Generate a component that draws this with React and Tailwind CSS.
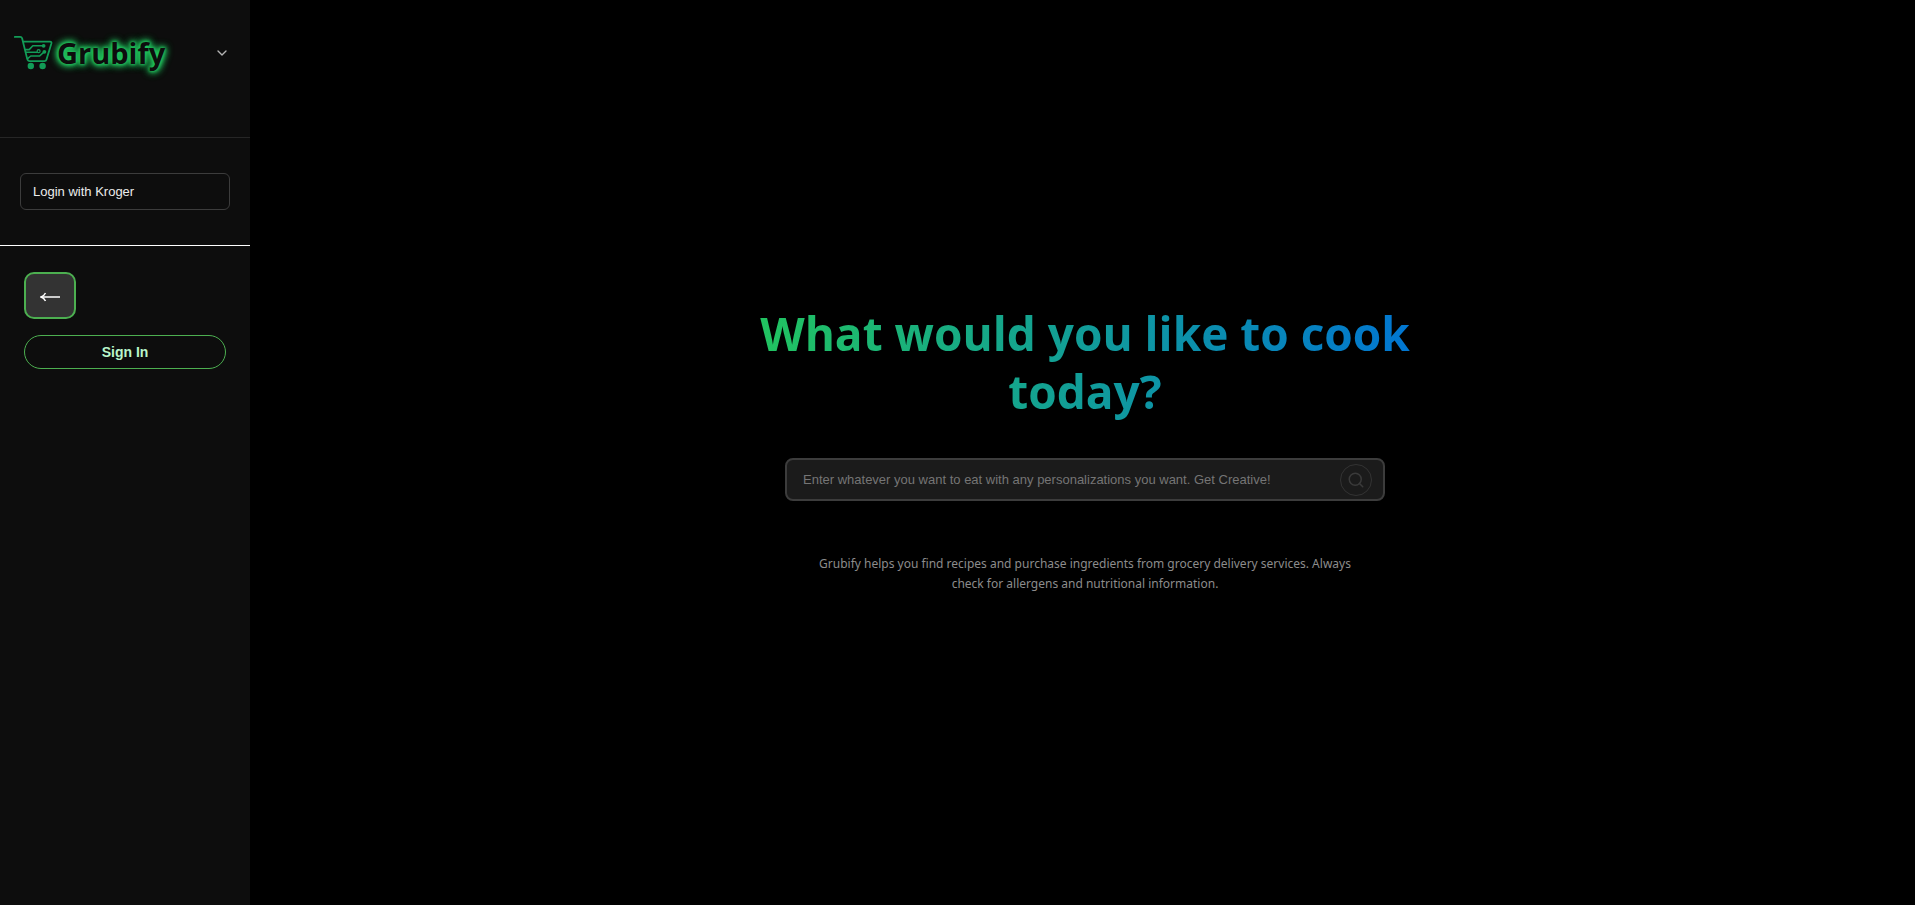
import React from "react";
import { ChevronDown, Search } from "lucide-react";

function CartLogo() {
  return (
    <svg viewBox="0 0 42 36" className="h-9 w-[42px] shrink-0" fill="none" stroke="#129c57" strokeLinecap="round" strokeLinejoin="round" aria-hidden="true">
      <path d="M1.8 2.9h5.4c1 0 1.6.5 1.9 1.4l5.1 20.6c.4 1.5 1.2 2.2 2.6 2.2h14.6c1 0 1.7-.4 2-1.4l5-16.2c.3-1.2-.2-1.8-1.4-1.8H10" strokeWidth="1.8" />
      <g strokeWidth="1.6">
        <path d="M12.6 15.6h3.6l3.6-3.8h10" />
        <path d="M13 18.2h11" />
        <path d="M14.6 24.6l3.2-2.6h8.8l4-3.6" />
      </g>
      <g fill="#129c57" stroke="none">
        <circle cx="30.6" cy="11.8" r="1.9" />
        <circle cx="31.4" cy="17.8" r="1.9" />
        <circle cx="17.8" cy="32" r="3.2" />
        <circle cx="29.6" cy="32" r="3.2" />
      </g>
      <circle cx="25.6" cy="17.2" r="1.5" strokeWidth="1.2" />
    </svg>
  );
}

function Sidebar() {
  return (
    <aside className="flex w-[250px] shrink-0 flex-col bg-[#0d0d0d]">
      <div className="flex h-[138px] items-start justify-between border-b border-[#262626] pt-[34px] pr-5 pl-[13px]">
        <div className="flex items-start gap-[2px]">
          <CartLogo />
          <span className="font-['Open_Sans',sans-serif] text-[29px] leading-[38px] font-bold text-[#0d0d0d] [text-shadow:0_0_3px_#22c55e,0_0_4px_#22c55e,0_0_6px_#22c55e,0_0_8px_#22c55e,0_0_10px_#22c55e]">
            Grubify
          </span>
        </div>
        <button type="button" aria-label="Open menu" className="mt-[11px] text-[#b4b4b4]">
          <ChevronDown size={16} strokeWidth={2} />
        </button>
      </div>
      <div className="border-b border-white px-5 py-[35px]">
        <button type="button" className="h-[37px] w-full rounded-md border border-[#3c3c3c] px-3 text-left text-[13px] text-[#ececec]">
          Login with Kroger
        </button>
      </div>
      <div className="flex flex-col items-start gap-4 px-6 pt-[26px]">
        <button type="button" aria-label="Back" className="flex h-[47px] w-[52px] items-center justify-center rounded-[10px] border-2 border-[#4caf50] bg-[#333] pt-[2px] text-white">
          <svg viewBox="0 0 20 10" className="h-[10px] w-5" fill="none" stroke="currentColor" strokeWidth="1.5" aria-hidden="true">
            <path d="M1 5H20" />
            <path d="M5.5 1C4.5 3 3 4.4 1 5C3 5.6 4.5 7 5.5 9" />
          </svg>
        </button>
        <button type="button" className="h-[34px] w-[202px] rounded-full border border-[#4caf50] text-sm font-bold text-[#b9f6ca]">
          Sign In
        </button>
      </div>
    </aside>
  );
}

export default function App() {
  return (
    <div className="flex min-h-screen bg-black font-['Liberation_Sans',Arial,sans-serif]">
      <Sidebar />
      <main className="flex flex-1 flex-col items-center justify-center pl-[5px]">
        <h1 className="w-full max-w-[680px] bg-linear-to-r/srgb from-[#22c55e] to-[#0074d4] bg-clip-text px-2 text-center font-['Open_Sans',sans-serif] text-[46px] leading-[58px] font-bold text-transparent">
          What would you like to cook today?
        </h1>
        <form className="mt-[38px] flex h-[43px] w-full max-w-[600px] items-center rounded-lg border-2 border-[#3c3c3c] bg-[#1b1b1b] pt-px pr-[11px] pl-4" onSubmit={(e) => e.preventDefault()}>
          <input
            type="text"
            aria-label="Recipe request"
            placeholder="Enter whatever you want to eat with any personalizations you want. Get Creative!"
            className="min-w-0 flex-1 bg-transparent text-[13px] text-white outline-none placeholder:text-[#757575]"
          />
          <button type="submit" aria-label="Search" className="flex size-8 items-center justify-center rounded-full border border-[#333] text-[#3a3a3a]">
            <Search size={18} strokeWidth={2} />
          </button>
        </form>
        <p className="mt-[53px] w-full max-w-[560px] pb-2 text-center font-['Noto_Sans',sans-serif] text-[12px] leading-5 text-[#8c8c8c]">
          Grubify helps you find recipes and purchase ingredients from grocery delivery services. Always check for allergens and nutritional information.
        </p>
      </main>
    </div>
  );
}
